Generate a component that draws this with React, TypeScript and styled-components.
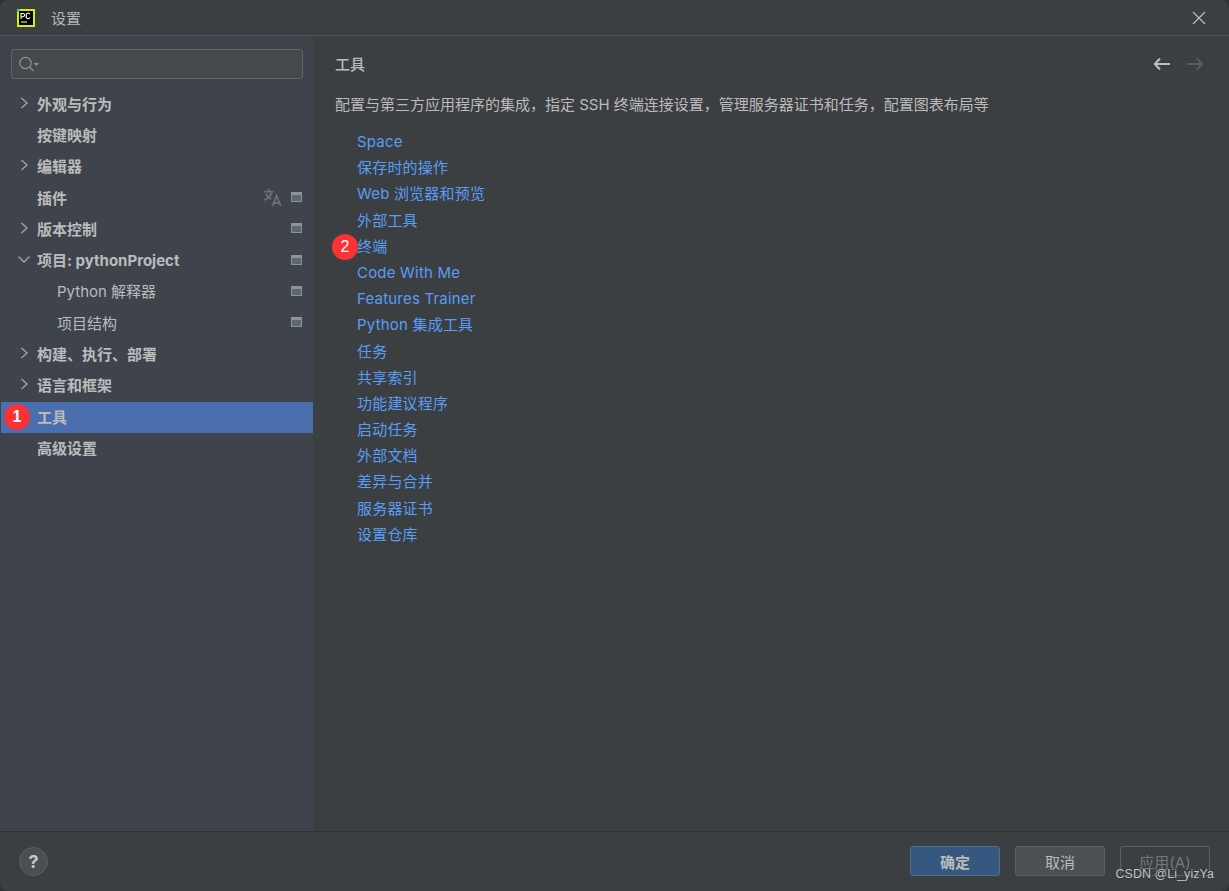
import React from 'react';
import styled, { createGlobalStyle } from 'styled-components';

const GlobalStyle = createGlobalStyle`
  html, body {
    margin: 0;
    padding: 0;
    background: #2f3133;
  }
  * {
    box-sizing: border-box;
  }
`;

const Window = styled.div`
  position: relative;
  width: 1229px;
  height: 891px;
  display: flex;
  flex-direction: column;
  background: #3c3f41;
  border-radius: 8px;
  overflow: hidden;
  color: #bbbbbb;
  font-family: "Inter", "Noto Sans CJK SC", sans-serif;
  font-size: 15px;
`;

const TitleBar = styled.div`
  flex: 0 0 36px;
  display: flex;
  align-items: center;
  padding: 0 23px 0 17px;
  border-bottom: 1px solid #4e5052;
`;

const WindowTitle = styled.div`
  flex: 1;
  margin-left: 16px;
  font-size: 15px;
  color: #b4b6b8;
`;

const Body = styled.div`
  flex: 1;
  display: flex;
  min-height: 0;
`;

const Sidebar = styled.div`
  width: 314px;
  padding: 13px 0 0 1px;
  background: #3e434c;
  border-right: 1px solid #3c3f41;
`;

const SearchBox = styled.div`
  height: 30px;
  margin: 0 10px 0 10px;
  padding-left: 6px;
  display: flex;
  align-items: center;
  background: #45494a;
  border: 1px solid #646464;
  border-radius: 3px;
`;

const TreeList = styled.div`
  margin-top: 10px;
`;

const TreeRow = styled.div<{ $selected?: boolean; $child?: boolean }>`
  height: 31.3px;
  display: flex;
  align-items: center;
  padding: 0 11px 3px ${(props) => (props.$child ? '56px' : '36px')};
  position: relative;
  font-size: 15px;
  font-weight: ${(props) => (props.$child ? 400 : 700)};
  color: #bbbbbb;
  background: ${(props) => (props.$selected ? '#4b6eaf' : 'transparent')};
`;

const RowLabel = styled.span`
  flex: 1;
  white-space: nowrap;
`;

const Chevron = styled.span`
  position: absolute;
  left: 16px;
  top: 50%;
  width: 14px;
  height: 14px;
  margin-top: -9px;
  display: flex;
`;

const RowIcons = styled.span`
  display: flex;
  align-items: center;
  gap: 9px;
`;

const Content = styled.div`
  flex: 1;
  padding: 17px 20px 0 21px;
`;

const ContentHeader = styled.div`
  display: flex;
  align-items: center;
  height: 20px;
`;

const ContentTitle = styled.div`
  flex: 1;
  font-size: 15px;
  font-weight: 500;
  color: #bbbbbb;
`;

const NavArrows = styled.div`
  display: flex;
  gap: 17px;
  margin: 1px 5px 0 0;
`;

const Description = styled.div`
  margin-top: 22px;
  height: 20px;
  line-height: 20px;
  font-size: 15px;
  color: #bbbbbb;
  white-space: nowrap;
`;

const LinkList = styled.div`
  margin-top: 14px;
  padding-left: 22px;
  display: flex;
  flex-direction: column;
`;

const LinkItem = styled.a`
  height: 26.2px;
  line-height: 26px;
  font-size: 15px;
  letter-spacing: 0.2px;
  color: #589df6;
  white-space: nowrap;
`;

const Footer = styled.div`
  flex: 0 0 60px;
  display: flex;
  align-items: center;
  padding: 0 19px 1px 19px;
  border-top: 1px solid #323232;
`;

const HelpButton = styled.div`
  width: 29px;
  height: 29px;
  border-radius: 50%;
  display: flex;
  align-items: center;
  justify-content: center;
  background: #4c4f51;
  border: 1px solid #5b5e60;
  color: #c4c6c8;
  font-size: 18px;
  font-weight: 700;
`;

const FooterActions = styled.div`
  margin-left: auto;
  display: flex;
  gap: 15px;
`;

const DialogButton = styled.div<{ $variant?: 'primary' | 'disabled' }>`
  width: 90px;
  height: 30px;
  display: flex;
  align-items: center;
  justify-content: center;
  border-radius: 3px;
  font-size: 15px;
  font-weight: ${(props) => (props.$variant === 'primary' ? 700 : 400)};
  color: ${(props) => (props.$variant === 'disabled' ? '#777777' : '#bbbbbb')};
  background: ${(props) =>
    props.$variant === 'primary' ? '#365880' : props.$variant === 'disabled' ? 'transparent' : '#4c5052'};
  border: 1px solid
    ${(props) => (props.$variant === 'primary' ? '#4c708c' : '#5e6060')};
`;

const Badge = styled.div`
  position: absolute;
  width: 26px;
  height: 26px;
  border-radius: 50%;
  background: #fc3136;
  color: #ffffff;
  display: flex;
  align-items: center;
  justify-content: center;
  font-family: "Liberation Sans", sans-serif;
  font-size: 16px;
`;

const SidebarBadge = styled(Badge)`
  left: 3px;
  top: 2px;
`;

const TerminalBadge = styled(Badge)`
  left: 332px;
  top: 234px;
`;

const Watermark = styled.div`
  position: absolute;
  right: 15px;
  bottom: 10px;
  font-family: "Liberation Sans", sans-serif;
  font-size: 12.4px;
  letter-spacing: 0.1px;
  color: #c4c6c8;
  text-shadow: 0 0 1px #222222;
`;

const Logo = () => (
  <svg width="18" height="18" viewBox="0 0 18 18">
    <rect width="18" height="18" fill="#d2ee10" />
    <rect x="0" y="0" width="3" height="3" fill="#35d67a" />
    <rect x="2" y="2" width="14" height="14" fill="#000000" />
    <rect x="4" y="12.5" width="6" height="1" fill="#ffffff" />
    <path d="M4 10V4.5h2a1.5 1.5 0 0 1 0 3.2H4M13 5.2a1.9 1.9 0 0 0-3.6 1.6 1.9 1.9 0 0 0 3.6 1.6" fill="none" stroke="#ffffff" strokeWidth="1.1" />
  </svg>
);

const SearchIcon = () => (
  <svg width="22" height="18" viewBox="0 0 22 18" fill="none">
    <circle cx="7.5" cy="8" r="5.6" stroke="#8d9194" strokeWidth="1.2" />
    <path d="M11.5 12L15.5 16" stroke="#8d9194" strokeWidth="1.5" />
    <path d="M15.5 8h5.5l-2.7 3z" fill="#8d9194" />
  </svg>
);

const CloseIcon = () => (
  <svg width="14" height="14" viewBox="0 0 14 14" fill="none">
    <path d="M1 1l12 12M13 1L1 13" stroke="#bdbfc1" strokeWidth="1.1" />
  </svg>
);

const ArrowIcon = ({ dir, color }: { dir: 'left' | 'right'; color: string }) => (
  <svg width="17" height="14" viewBox="0 0 17 14" fill="none" style={{ transform: dir === 'right' ? 'scaleX(-1)' : undefined }}>
    <path d="M7 1.5L1.8 7 7 12.5M2 7h15" stroke={color} strokeWidth="2" />
  </svg>
);

const ChevronRight = () => (
  <svg width="14" height="14" viewBox="0 0 14 14" fill="none">
    <path d="M4.5 2l5.5 5-5.5 5" stroke="#a0a3a6" strokeWidth="1.4" />
  </svg>
);

const ChevronDown = () => (
  <svg width="14" height="14" viewBox="0 0 14 14" fill="none">
    <path d="M1.5 4.5L7 10l5.5-5.5" stroke="#a0a3a6" strokeWidth="1.4" />
  </svg>
);

const ProjectIcon = () => (
  <svg width="11" height="10" viewBox="0 0 11 10">
    <rect x="0" y="0" width="11" height="10" fill="#8a949c" />
    <rect x="1" y="3" width="9" height="6" fill="#5f676d" />
  </svg>
);

const TranslateIcon = () => (
  <svg width="19" height="19" viewBox="0 0 18 18" fill="none" stroke="#6c7075" strokeWidth="1.7">
    <path d="M1 3.5h9M5.5 1v2.5M8.5 3.5C7.6 7 4.8 10 1.2 11.5M2.8 5.5c1 2.3 2.8 4 5 5" />
    <path d="M9 17l3.8-9.5L16.8 17M10.2 14.2h5.2" />
  </svg>
);

type TreeItem = {
  label: string;
  chevron?: 'right' | 'down';
  child?: boolean;
  project?: boolean;
  translate?: boolean;
  selected?: boolean;
};

const treeItems: TreeItem[] = [
  { label: '外观与行为', chevron: 'right' },
  { label: '按键映射' },
  { label: '编辑器', chevron: 'right' },
  { label: '插件', project: true, translate: true },
  { label: '版本控制', chevron: 'right', project: true },
  { label: '项目: pythonProject', chevron: 'down', project: true },
  { label: 'Python 解释器', child: true, project: true },
  { label: '项目结构', child: true, project: true },
  { label: '构建、执行、部署', chevron: 'right' },
  { label: '语言和框架', chevron: 'right' },
  { label: '工具', selected: true },
  { label: '高级设置' },
];

const links = [
  'Space',
  '保存时的操作',
  'Web 浏览器和预览',
  '外部工具',
  '终端',
  'Code With Me',
  'Features Trainer',
  'Python 集成工具',
  '任务',
  '共享索引',
  '功能建议程序',
  '启动任务',
  '外部文档',
  '差异与合并',
  '服务器证书',
  '设置仓库',
];

const App = () => {
  return (
    <>
      <GlobalStyle />
      <Window>
        <TitleBar>
          <Logo />
          <WindowTitle>设置</WindowTitle>
          <CloseIcon />
        </TitleBar>
        <Body>
          <Sidebar>
            <SearchBox>
              <SearchIcon />
            </SearchBox>
            <TreeList>
              {treeItems.map((item) => (
                <TreeRow key={item.label} $selected={item.selected} $child={item.child}>
                  {item.chevron && <Chevron>{item.chevron === 'right' ? <ChevronRight /> : <ChevronDown />}</Chevron>}
                  <RowLabel>{item.label}</RowLabel>
                  <RowIcons>
                    {item.translate && <TranslateIcon />}
                    {item.project && <ProjectIcon />}
                  </RowIcons>
                  {item.selected && <SidebarBadge>1</SidebarBadge>}
                </TreeRow>
              ))}
            </TreeList>
          </Sidebar>
          <Content>
            <ContentHeader>
              <ContentTitle>工具</ContentTitle>
              <NavArrows>
                <ArrowIcon dir="left" color="#bcbec0" />
                <ArrowIcon dir="right" color="#5a5d5f" />
              </NavArrows>
            </ContentHeader>
            <Description>配置与第三方应用程序的集成，指定 SSH 终端连接设置，管理服务器证书和任务，配置图表布局等</Description>
            <LinkList>
              {links.map((link) => (
                <LinkItem key={link}>{link}</LinkItem>
              ))}
            </LinkList>
          </Content>
        </Body>
        <Footer>
          <HelpButton>?</HelpButton>
          <FooterActions>
            <DialogButton $variant="primary">确定</DialogButton>
            <DialogButton>取消</DialogButton>
            <DialogButton $variant="disabled">应用(A)</DialogButton>
          </FooterActions>
        </Footer>
        <TerminalBadge>2</TerminalBadge>
        <Watermark>CSDN @Li_yizYa</Watermark>
      </Window>
    </>
  );
};

export default App;
